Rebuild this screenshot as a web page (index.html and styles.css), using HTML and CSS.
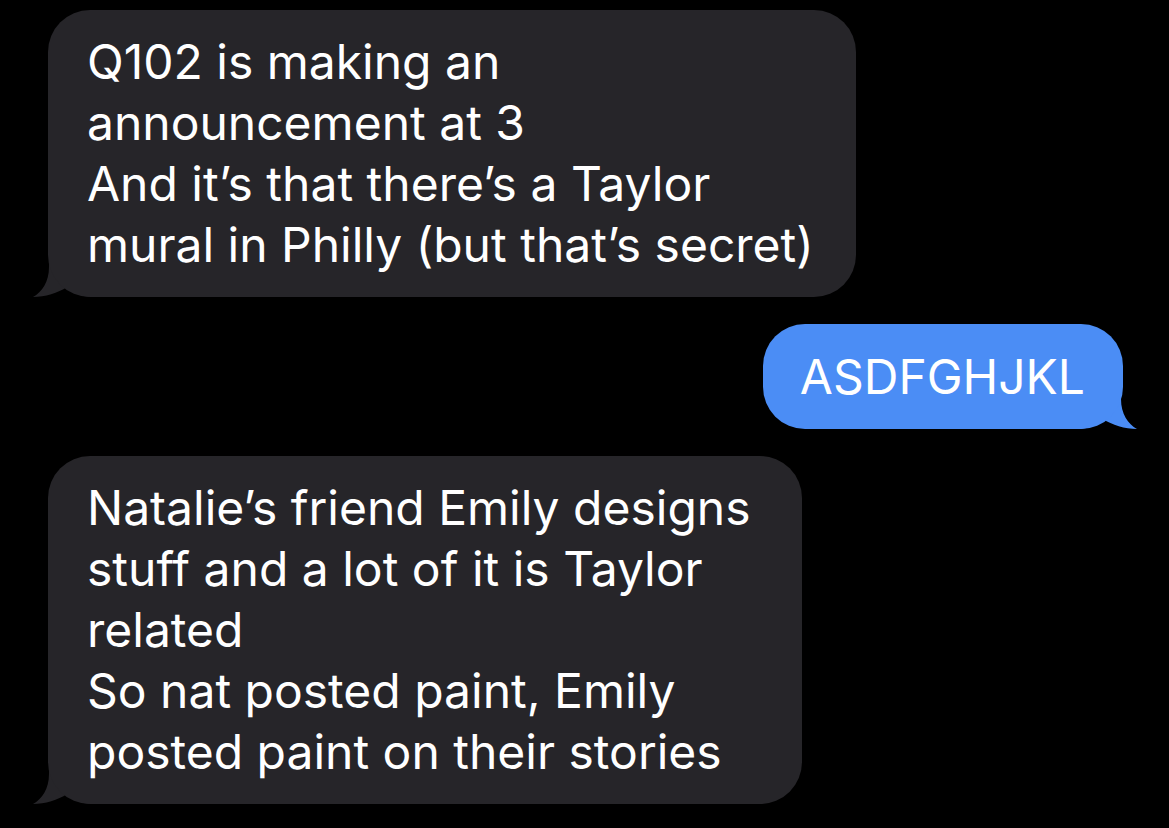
FILE: index.html
```html
<!DOCTYPE html>
<html lang="en">
<head>
<meta charset="utf-8">
<title>Messages</title>
<link rel="stylesheet" href="styles.css">
</head>
<body>
  <main class="thread">
    <div class="msg msg-in">
      <p class="bubble">Q102 is making an<br>announcement at 3<br>And it’s that there’s a Taylor<br>mural in Philly (but that’s secret)</p>
      <svg class="tail" viewBox="0 0 60 40" width="60" height="40" aria-hidden="true"><path d="M17 0H60V40C50 40 42 36 35 30C26 36 13 40 1 40C10 35 17 25 17 10Z"/></svg>
    </div>
    <div class="msg msg-out">
      <p class="bubble">ASDFGHJKL</p>
      <svg class="tail" viewBox="0 0 60 40" width="60" height="40" aria-hidden="true"><path d="M43 0H0V40C10 40 18 36 25 30C34 36 47 40 59 40C50 35 43 25 43 10Z"/></svg>
    </div>
    <div class="msg msg-in msg-loose">
      <p class="bubble">Natalie’s friend Emily designs<br>stuff and a lot of it is Taylor<br>related<br>So nat posted paint, Emily<br>posted paint on their stories</p>
      <svg class="tail" viewBox="0 0 60 40" width="60" height="40" aria-hidden="true"><path d="M17 0H60V40C50 40 42 36 35 30C26 36 13 40 1 40C10 35 17 25 17 10Z"/></svg>
    </div>
  </main>
</body>
</html>
```

FILE: styles.css
```css
html, body {
  margin: 0;
  background: #000;
}

.thread {
  display: flex;
  flex-direction: column;
  gap: 27px;
  padding: 10px 46px 0 48px;
  font-family: Inter, "Liberation Sans", sans-serif;
  font-size: 48px;
  line-height: 61px;
  color: #fff;
}

.msg {
  position: relative;
  width: fit-content;
}

.msg-out {
  align-self: flex-end;
}

.bubble {
  position: relative;
  z-index: 1;
  margin: 0;
  padding: 21px 42px 22px 39px;
  border-radius: 42px;
  white-space: nowrap;
}

.msg-in .bubble {
  background: #262529;
}

.msg-loose .bubble {
  padding-right: 51px;
}

.msg-out .bubble {
  background: #4b8df5;
  padding: 22px 38px 22px 37px;
}

/* Tail tucked under the bottom corner of each bubble */
.tail {
  position: absolute;
  bottom: 0;
  z-index: 0;
}

.msg-in .tail {
  left: -16px;
  fill: #262529;
}

.msg-out .tail {
  right: -15px;
  fill: #4b8df5;
}
```
